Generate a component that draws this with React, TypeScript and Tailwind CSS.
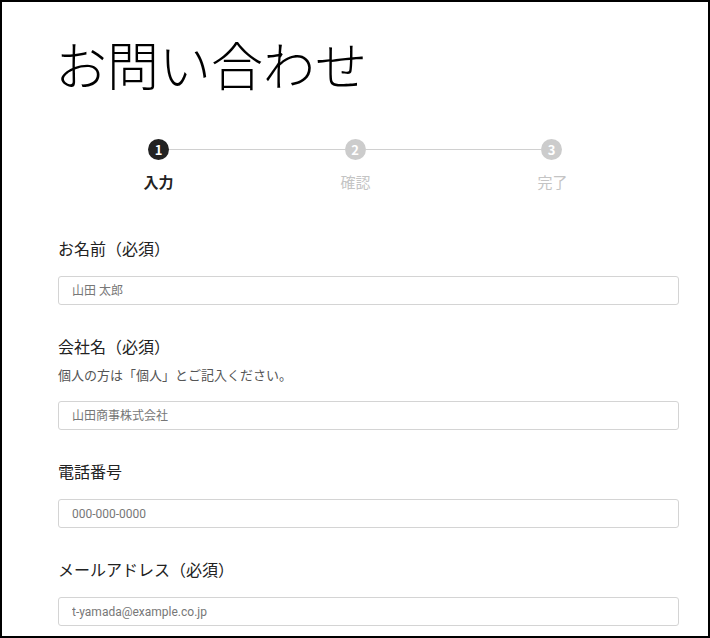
const jp = "font-['Noto_Sans_CJK_JP','Noto_Sans',sans-serif]";
const ph = "font-['Roboto','Noto_Sans_CJK_JP',sans-serif]";

const steps = [
  { n: 1, label: "入力", active: true },
  { n: 2, label: "確認", active: false },
  { n: 3, label: "完了", active: false },
];

function Field({
  label,
  note,
  placeholder,
}: {
  label: string;
  note?: string;
  placeholder: string;
}) {
  return (
    <div className="mb-[29px]">
      <p className="text-[16px] leading-[24px] text-[#222]">{label}</p>
      {note && <p className="mt-[6px] text-[13px] leading-[21px] text-[#555]">{note}</p>}
      <input
        className={`mt-[16px] block h-[29px] w-full rounded-[3px] border border-[#d4d4d4] px-[13px] text-[12px] outline-none placeholder:text-[#777] ${ph}`}
        placeholder={placeholder}
      />
    </div>
  );
}

export default function App() {
  return (
    <div className={`h-[638px] w-[710px] overflow-hidden border-2 border-black bg-white ${jp}`}>
      <div className="pl-[56px] pr-[29px]">
        <h1 className="-ml-[3px] mt-[30px] text-[52px] font-light leading-[64px] text-black">お問い合わせ</h1>

        <div className="mt-[43px] ml-[90px] flex w-[414px] items-center">
          {steps.map((s, i) => (
            <div key={s.n} className={i === 0 ? "flex items-center" : "flex flex-1 items-center"}>
              {i > 0 && <div className="h-px flex-1 bg-[#d0d0d0]" />}
              <div
                className={`flex h-[21px] w-[21px] items-center justify-center rounded-full text-[13px] font-bold text-white ${
                  s.active ? "bg-[#222]" : "bg-[#cccccc]"
                }`}
              >
                {s.n}
              </div>
            </div>
          ))}
        </div>
        <div className="mt-[11px] grid grid-cols-[197px_197px_197px] ml-[2px]">
          {steps.map((s) => (
            <p
              key={s.n}
              className={`text-center text-[15px] leading-[22px] ${
                s.active ? "font-bold text-[#222]" : "text-[#c4c4c4]"
              }`}
            >
              {s.label}
            </p>
          ))}
        </div>

        <div className="mt-[43px]">
          <Field label="お名前（必須）" placeholder="山田 太郎" />
          <Field
            label="会社名（必須）"
            note="個人の方は「個人」とご記入ください。"
            placeholder="山田商事株式会社"
          />
          <Field label="電話番号" placeholder="000-000-0000" />
          <Field label="メールアドレス（必須）" placeholder="t-yamada@example.co.jp" />
        </div>
      </div>
    </div>
  );
}
